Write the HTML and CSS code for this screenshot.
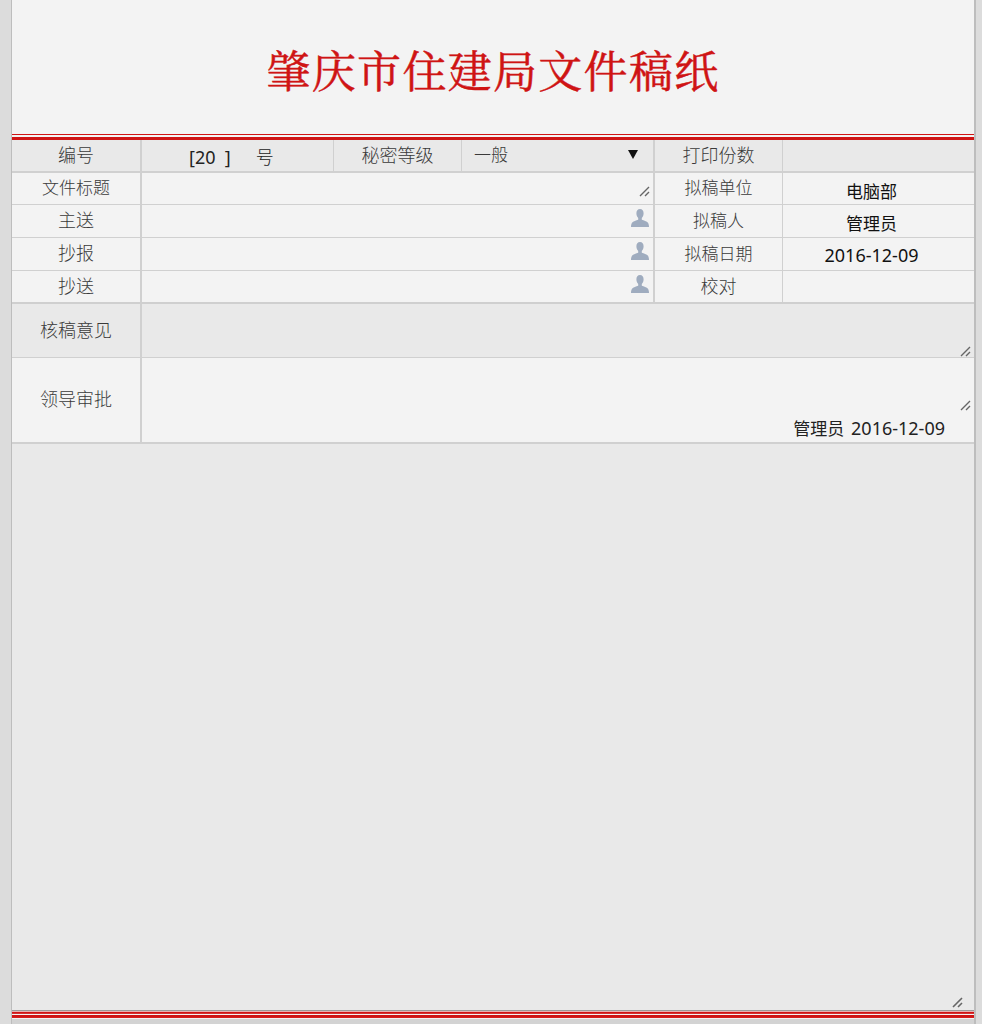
FILE: index.html
```html
<!DOCTYPE html>
<html lang="zh">
<head>
<meta charset="utf-8">
<title>肇庆市住建局文件稿纸</title>
<link rel="stylesheet" href="styles.css">
</head>
<body>
<main class="sheet">
  <h1 class="title">肇庆市住建局文件稿纸</h1>
  <div class="red-rule"></div>
  <section class="info">
    <div class="row row-head">
      <div class="cell label col-a">编号</div>
      <div class="cell col-b value-num">[20&nbsp;&nbsp;]<span class="hao">号</span></div>
      <div class="cell label col-c">秘密等级</div>
      <div class="cell col-d select"><span>一般</span><svg class="caret" viewBox="0 0 10 10"><path d="M0 1h10L5 10z"/></svg></div>
      <div class="cell label col-e">打印份数</div>
      <div class="cell col-f"></div>
    </div>
    <div class="row row-a">
      <div class="cell label small col-a">文件标题</div>
      <div class="cell col-wide"><svg class="grip" viewBox="0 0 11 11"><path d="M1 10 10 1M6 10l4-4"/></svg></div>
      <div class="cell label small col-e">拟稿单位</div>
      <div class="cell value col-f"><span class="cjk">电脑部</span></div>
    </div>
    <div class="row row-b">
      <div class="cell label col-a">主送</div>
      <div class="cell col-wide"><svg class="person" viewBox="0 0 18 18"><path d="M9 0c2.300 0 3.600 1.900 3.600 4.300 0 2-.7 3.700-1.800 4.800v1.700c1.800.8 5.200 1.500 6.200 3 .5.900 1 2.200 1 4.200H0c0-2 .5-3.300 1-4.200 1-1.500 4.400-2.200 6.200-3V9.100C6.100 8 5.400 6.300 5.400 4.300 5.400 1.900 6.700 0 9 0z"/></svg></div>
      <div class="cell label small col-e">拟稿人</div>
      <div class="cell value col-f"><span class="cjk">管理员</span></div>
    </div>
    <div class="row row-b">
      <div class="cell label col-a">抄报</div>
      <div class="cell col-wide"><svg class="person" viewBox="0 0 18 18"><path d="M9 0c2.300 0 3.600 1.900 3.600 4.300 0 2-.7 3.700-1.800 4.800v1.700c1.800.8 5.200 1.500 6.200 3 .5.900 1 2.200 1 4.200H0c0-2 .5-3.300 1-4.200 1-1.500 4.400-2.200 6.200-3V9.100C6.100 8 5.400 6.300 5.400 4.300 5.400 1.900 6.700 0 9 0z"/></svg></div>
      <div class="cell label small col-e">拟稿日期</div>
      <div class="cell value date col-f">2016-12-09</div>
    </div>
    <div class="row row-c">
      <div class="cell label col-a">抄送</div>
      <div class="cell col-wide"><svg class="person" viewBox="0 0 18 18"><path d="M9 0c2.300 0 3.600 1.900 3.600 4.300 0 2-.7 3.700-1.800 4.800v1.700c1.800.8 5.200 1.500 6.200 3 .5.900 1 2.200 1 4.200H0c0-2 .5-3.300 1-4.200 1-1.500 4.400-2.200 6.200-3V9.100C6.100 8 5.400 6.300 5.400 4.300 5.400 1.900 6.700 0 9 0z"/></svg></div>
      <div class="cell label col-e">校对</div>
      <div class="cell col-f"></div>
    </div>
  </section>
  <section class="review">
    <div class="block block-check">
      <div class="block-label">核稿意见</div>
      <div class="block-body"><svg class="grip" viewBox="0 0 11 11"><path d="M1 10 10 1M6 10l4-4"/></svg></div>
    </div>
    <div class="block block-lead">
      <div class="block-label lead-label">领导审批</div>
      <div class="block-body"><svg class="grip lead-grip" viewBox="0 0 11 11"><path d="M1 10 10 1M6 10l4-4"/></svg><div class="sign"><span class="cjk">管理员</span> 2016-12-09</div></div>
    </div>
  </section>
  <section class="content"><svg class="grip big-grip" viewBox="0 0 11 11"><path d="M1 10 10 1M6 10l4-4"/></svg></section>
  <div class="foot-rule"></div>
</main>
</body>
</html>
```
FILE: styles.css
```css
* { box-sizing: border-box; }
html, body { margin: 0; height: 1024px; overflow: hidden; background: #dcdcdc; }
body { font-family: "Noto Sans", "Noto Sans CJK SC", sans-serif; color: #111; }
.sheet {
  width: 965px;
  margin-left: 11px;
  height: 1024px;
  background: #f3f3f3;
  border-left: 1px solid #bdbdbd;
  border-right: 2px solid #bdbdbd;
  display: flex;
  flex-direction: column;
}
.title {
  margin: 0;
  height: 134px;
  flex: none;
  padding-top: 39px;
  text-align: center;
  font-family: "Noto Serif CJK SC", "Liberation Serif", "Noto Sans CJK SC", serif;
  font-size: 44px;
  line-height: 60px;
  letter-spacing: 1.300px;
  font-weight: 400;
  -webkit-text-stroke: 0.5px #cf1414;
  color: #cf1414;
}
.red-rule { flex: none; height: 6px; border-top: 1px solid #cf1414; border-bottom: 3px solid #cf1414; }
.info { flex: none; display: flex; flex-direction: column; }
.row { flex: none; display: grid; grid-template-columns: 130px 192px 128px 193px 128px 1fr; border-bottom: 1px solid #d0d0d0; }
.row-head { height: 33px; background: #e9e9e9; border-bottom-width: 2px; }
.row-a { height: 32px; }
.row-b { height: 33px; }
.row-c { height: 33px; border-bottom-width: 2px; border-bottom-color: #cfcfcf; }
.cell { display: flex; align-items: center; justify-content: center; border-right: 1px solid #d0d0d0; font-size: 18px; min-width: 0; }
.col-f { border-right: 0; }
.col-a { border-right-width: 2px; }
.col-wide { grid-column: 2 / span 3; border-right-width: 2px; justify-content: flex-end; padding-right: 4px; }
.col-d { border-right-width: 2px; }
.label { color: #3a3a3a; font-weight: 300; padding-bottom: 4px; }
.small { font-size: 17px; }
.value { color: #111; padding-top: 3px; padding-right: 14px; }
.date { padding-top: 2px; }
.cjk { font-size: 17px; }
.value-num { padding-top: 2px; justify-content: flex-start; padding-left: 47px; color: #222; }
.hao { margin-left: 25px; margin-bottom: 2px; font-weight: 300; }
.select { justify-content: space-between; padding: 0 15px 4px 12px; color: #3a3a3a; font-size: 17px; font-weight: 300; }
.caret { width: 10px; height: 10px; fill: #111; }
.grip { width: 11px; height: 11px; fill: none; stroke: #666; stroke-width: 1.400; }
.col-wide .grip { margin-top: 5px; margin-right: -1px; }
.person { width: 18px; height: 18px; fill: #9facbf; margin-bottom: 6px; }
.block { flex: none; display: grid; grid-template-columns: 130px 1fr; border-bottom: 1px solid #d0d0d0; }
.block-check { height: 54px; background: #e9e9e9; }
.block-lead { height: 86px; border-bottom-width: 2px; }
.block-label { display: flex; align-items: center; justify-content: center; font-size: 18px; color: #3a3a3a; font-weight: 300; border-right: 2px solid #d0d0d0; padding-bottom: 4px; }
.lead-label { padding-bottom: 5px; }
.block-body { position: relative; }
.block-body > .grip { position: absolute; right: 3px; bottom: 0; }
.block-body > .lead-grip { bottom: 31px; }
.sign { position: absolute; right: 29px; bottom: 1px; font-size: 18px; line-height: 24px; color: #222; }
.sign .cjk { margin-right: 2px; }
.content { flex: 1; min-height: 0; position: relative; background: #e9e9e9; }
.big-grip { position: absolute; right: 11px; bottom: 2px; stroke-width: 1.600; }
.foot-rule {
  flex: none;
  height: 14px;
  background: linear-gradient(to bottom,
    #9a9a9a 0 1px,
    #e9b0b0 1px 2px,
    #cf1414 2px 3px,
    #d63030 3px 4px,
    #f3f3f3 4px 5px,
    #cf1414 5px 7px,
    #d42020 7px 8px,
    #f3f3f3 8px 9px,
    #d3d3d3 9px 14px);
}
```
